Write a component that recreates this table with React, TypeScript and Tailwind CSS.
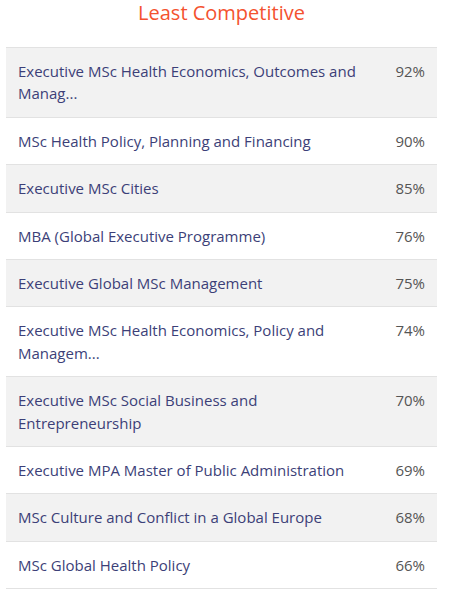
const rows = [
  { name: "Executive MSc Health Economics, Outcomes and Manag...", pct: "92%" },
  { name: "MSc Health Policy, Planning and Financing", pct: "90%" },
  { name: "Executive MSc Cities", pct: "85%" },
  { name: "MBA (Global Executive Programme)", pct: "76%" },
  { name: "Executive Global MSc Management", pct: "75%" },
  { name: "Executive MSc Health Economics, Policy and Managem...", pct: "74%" },
  { name: "Executive MSc Social Business and Entrepreneurship", pct: "70%" },
  { name: "Executive MPA Master of Public Administration", pct: "69%" },
  { name: "MSc Culture and Conflict in a Global Europe", pct: "68%" },
  { name: "MSc Global Health Policy", pct: "66%" },
];

export default function App() {
  return (
    <div
      className="bg-white w-[456px] h-[590px] overflow-hidden"
      style={{ fontFamily: "'Open Sans', 'Noto Sans', sans-serif" }}
    >
      <div className="ml-[6px] w-[431px]">
        <h2 className="text-center text-[20px] leading-[26px] h-[47px] text-[#f4522f] font-normal">
          Least Competitive
        </h2>
        <div className="border-t border-[#e2e2e2]">
          {rows.map((r, i) => (
            <div
              key={r.name}
              className={`flex items-start justify-between border-b border-[#e2e2e2] py-3 px-3 text-[15px] leading-[22.4px] ${
                i % 2 === 0 ? "bg-[#f2f2f2]" : "bg-white"
              }`}
            >
              <span className="text-[#3c3f78] w-[350px]">{r.name}</span>
              <span className="text-[#555555]">{r.pct}</span>
            </div>
          ))}
        </div>
      </div>
    </div>
  );
}
